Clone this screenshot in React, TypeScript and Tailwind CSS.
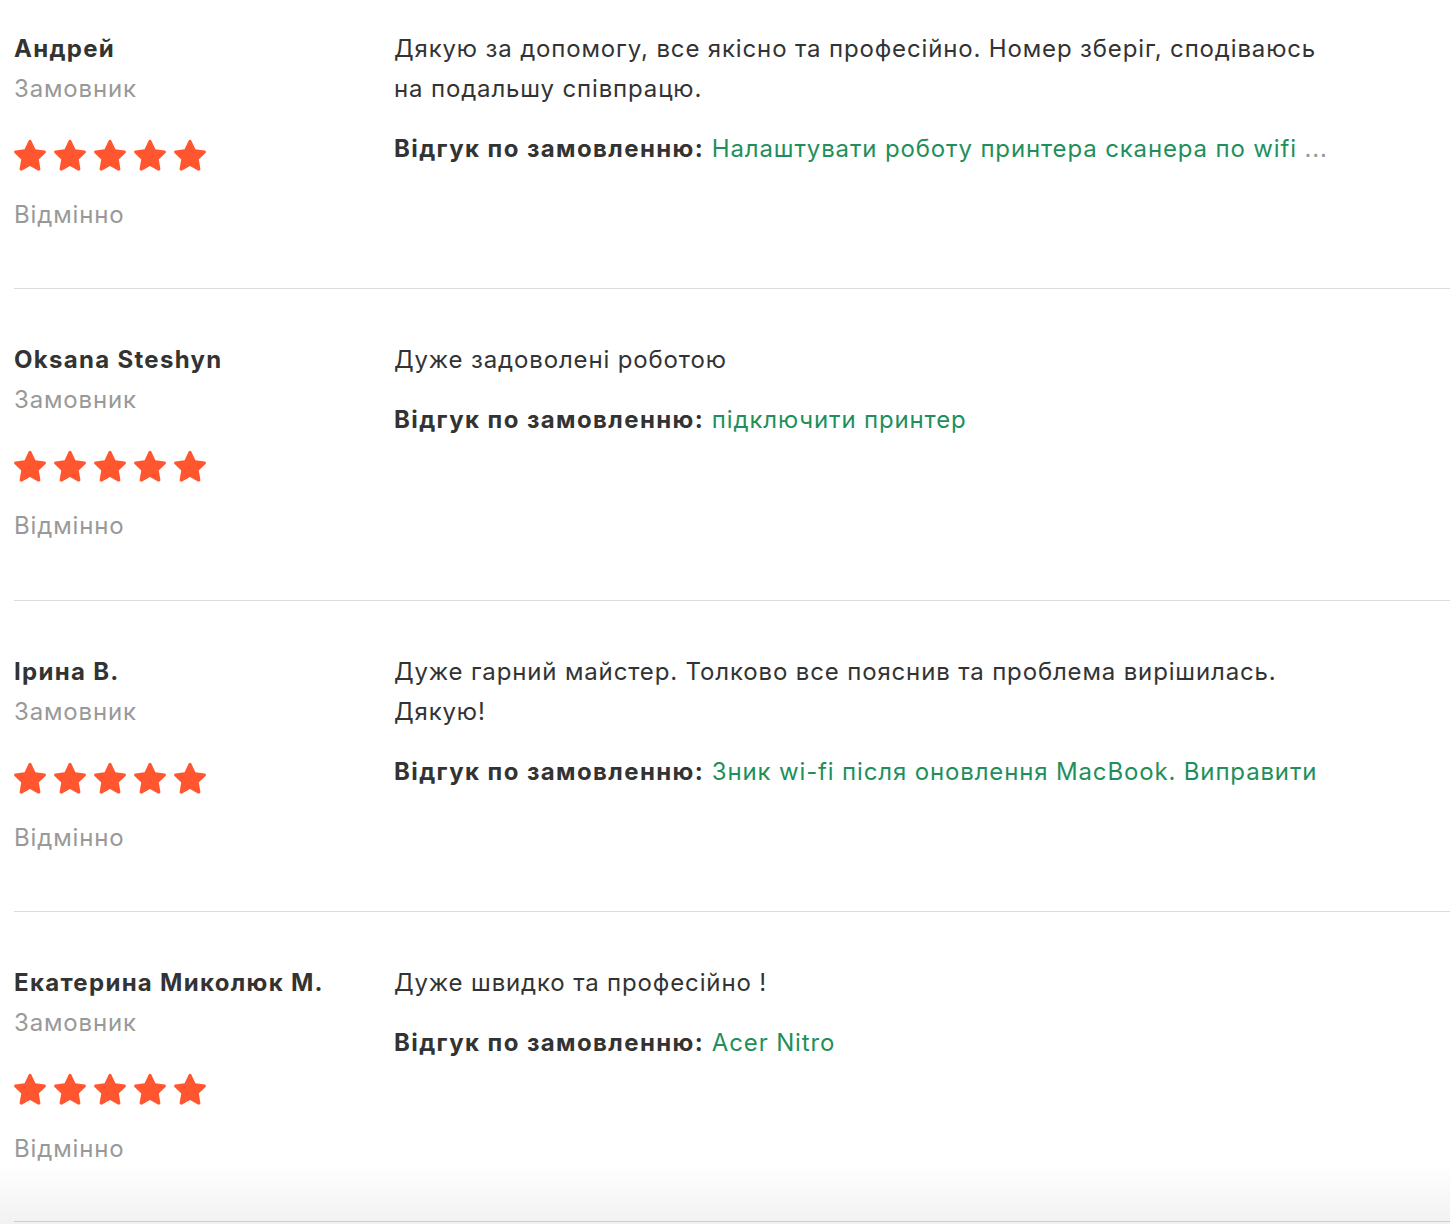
import React from "react";

type Review = { name: string; text: string[]; order: string; more?: boolean };

const reviews: Review[] = [
  {
    name: "Андрей",
    text: ["Дякую за допомогу, все якісно та професійно. Номер зберіг, сподіваюсь на подальшу співпрацю."],
    order: "Налаштувати роботу принтера сканера по wifi",
    more: true,
  },
  { name: "Oksana Steshyn", text: ["Дуже задоволені роботою"], order: "підключити принтер" },
  {
    name: "Ірина В.",
    text: ["Дуже гарний майстер. Толково все пояснив та проблема вирішилась. Дякую!"],
    order: "Зник wi-fi після оновлення MacBook. Виправити",
  },
  { name: "Екатерина Миколюк М.", text: ["Дуже швидко та професійно !"], order: "Acer Nitro" },
];

function Star() {
  return (
    <svg width="32" height="32" viewBox="1.6 1.3 20.8 20.8">
      <path
        d="M12 1.8c.4 0 .75.23.92.6l2.6 5.5 5.95.8c.4.06.72.33.84.71.12.38.02.8-.27 1.07l-4.35 4.2 1.06 5.95c.07.4-.1.8-.42 1.03-.33.24-.76.27-1.12.08L12 18.9l-5.2 2.84c-.37.2-.8.16-1.13-.08-.32-.23-.49-.63-.42-1.03l1.06-5.95-4.35-4.2c-.29-.28-.4-.69-.27-1.07.12-.38.45-.65.84-.71l5.96-.8 2.59-5.5c.17-.37.52-.6.92-.6z"
        fill="#ff5630"
      />
    </svg>
  );
}

const pads = ["pt-[29px] pb-[53px] border-[#dcdcdc]", "pt-[51px] pb-[54px] border-[#dcdcdc]", "pt-[51px] pb-[53px] border-[#dcdcdc]", "pt-[51px] pb-[52px] border-[#cccccc]"];

export default function App() {
  return (
    <div
      className="min-h-[1224px] bg-[linear-gradient(to_bottom,#ffffff_1165px,#f2f2f2_1222px)] pl-[14px] text-[24px] leading-[40px] tracking-[0.85px] text-[#333]"
      style={{ fontFamily: "Inter, 'Noto Sans', sans-serif" }}
    >
      {reviews.map((r, i) => (
        <div key={i} className={"flex border-b " + pads[i]}>
          <div className="w-[380px] shrink-0">
            <div className="font-bold tracking-[1.3px]">{r.name}</div>
            <div className="text-[#999]">Замовник</div>
            <div className="mt-[30px] flex h-[32px] gap-[8px]">
              <Star />
              <Star />
              <Star />
              <Star />
              <Star />
            </div>
            <div className="mt-[24px] text-[#999]">Відмінно</div>
          </div>
          <div className="w-[945px]">
            {r.text.map((t, j) => (
              <p key={j}>{t}</p>
            ))}
            <p className="mt-[20px]">
              <span className="font-bold tracking-[1.4px]">Відгук по замовленню:</span>{" "}
              <span className="text-[#1f8f5c]">{r.order}</span>
              {r.more && <span className="text-[#999]"> ...</span>}
            </p>
          </div>
        </div>
      ))}
    </div>
  );
}
